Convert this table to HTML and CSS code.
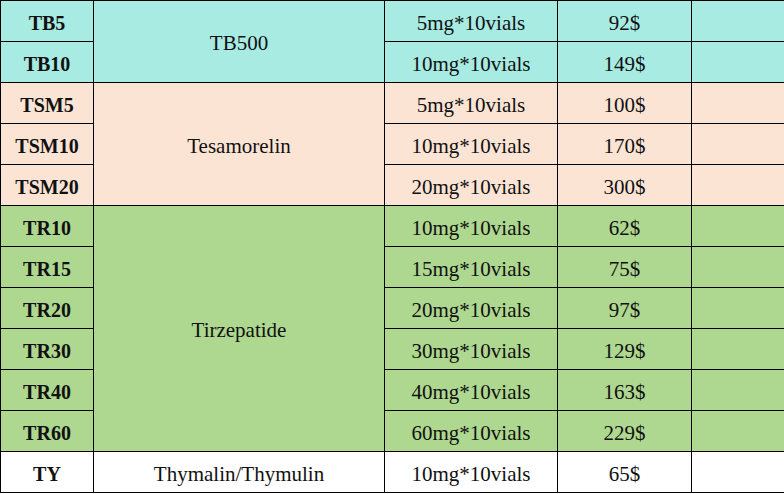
FILE: index.html
```html
<!DOCTYPE html>
<html>
<head>
<meta charset="utf-8">
<link rel="stylesheet" href="styles.css">
</head>
<body>
<div class="wrap">
<table class="price">
  <colgroup>
    <col class="c1"><col class="c2"><col class="c3"><col class="c4"><col class="c5">
  </colgroup>
  <tbody>
    <tr class="tb"><td class="code">TB5</td><td rowspan="2">TB500</td><td>5mg*10vials</td><td>92$</td><td></td></tr>
    <tr class="tb"><td class="code">TB10</td><td>10mg*10vials</td><td>149$</td><td></td></tr>
    <tr class="tsm"><td class="code">TSM5</td><td rowspan="3">Tesamorelin</td><td>5mg*10vials</td><td>100$</td><td></td></tr>
    <tr class="tsm"><td class="code">TSM10</td><td>10mg*10vials</td><td>170$</td><td></td></tr>
    <tr class="tsm"><td class="code">TSM20</td><td>20mg*10vials</td><td>300$</td><td></td></tr>
    <tr class="tr"><td class="code">TR10</td><td rowspan="6">Tirzepatide</td><td>10mg*10vials</td><td>62$</td><td></td></tr>
    <tr class="tr"><td class="code">TR15</td><td>15mg*10vials</td><td>75$</td><td></td></tr>
    <tr class="tr"><td class="code">TR20</td><td>20mg*10vials</td><td>97$</td><td></td></tr>
    <tr class="tr"><td class="code">TR30</td><td>30mg*10vials</td><td>129$</td><td></td></tr>
    <tr class="tr"><td class="code">TR40</td><td>40mg*10vials</td><td>163$</td><td></td></tr>
    <tr class="tr"><td class="code">TR60</td><td>60mg*10vials</td><td>229$</td><td></td></tr>
    <tr class="ty"><td class="code">TY</td><td>Thymalin/Thymulin</td><td>10mg*10vials</td><td>65$</td><td></td></tr>
  </tbody>
</table>
</div>
</body>
</html>
```
FILE: styles.css
```css
html, body {
  margin: 0;
  padding: 0;
  background: #ffffff;
  overflow: hidden;
}
.wrap {
  width: 784px;
  height: 494px;
  overflow: hidden;
}
.price {
  border-collapse: collapse;
  table-layout: fixed;
  width: 786px;
  font-family: "Liberation Serif", "Times New Roman", serif;
  font-size: 21px;
  color: #111111;
}
.c1 { width: 93px; }
.c2 { width: 291px; }
.c3 { width: 173px; }
.c4 { width: 134px; }
.c5 { width: 95px; }
.price td {
  border: 1.5px solid #000000;
  height: 36px;
  padding: 4px 0 0 0;
  text-align: center;
  vertical-align: middle;
  line-height: 1;
}
.price td.code {
  font-family: "Liberation Serif", "Times New Roman", serif;
  font-weight: bold;
  font-size: 20px;
  letter-spacing: 0;
}
.tb td { background: #a7ebe3; }
.tsm td { background: #fce4d5; }
.tr td { background: #aed78f; }
.ty td { background: #ffffff; }
```
